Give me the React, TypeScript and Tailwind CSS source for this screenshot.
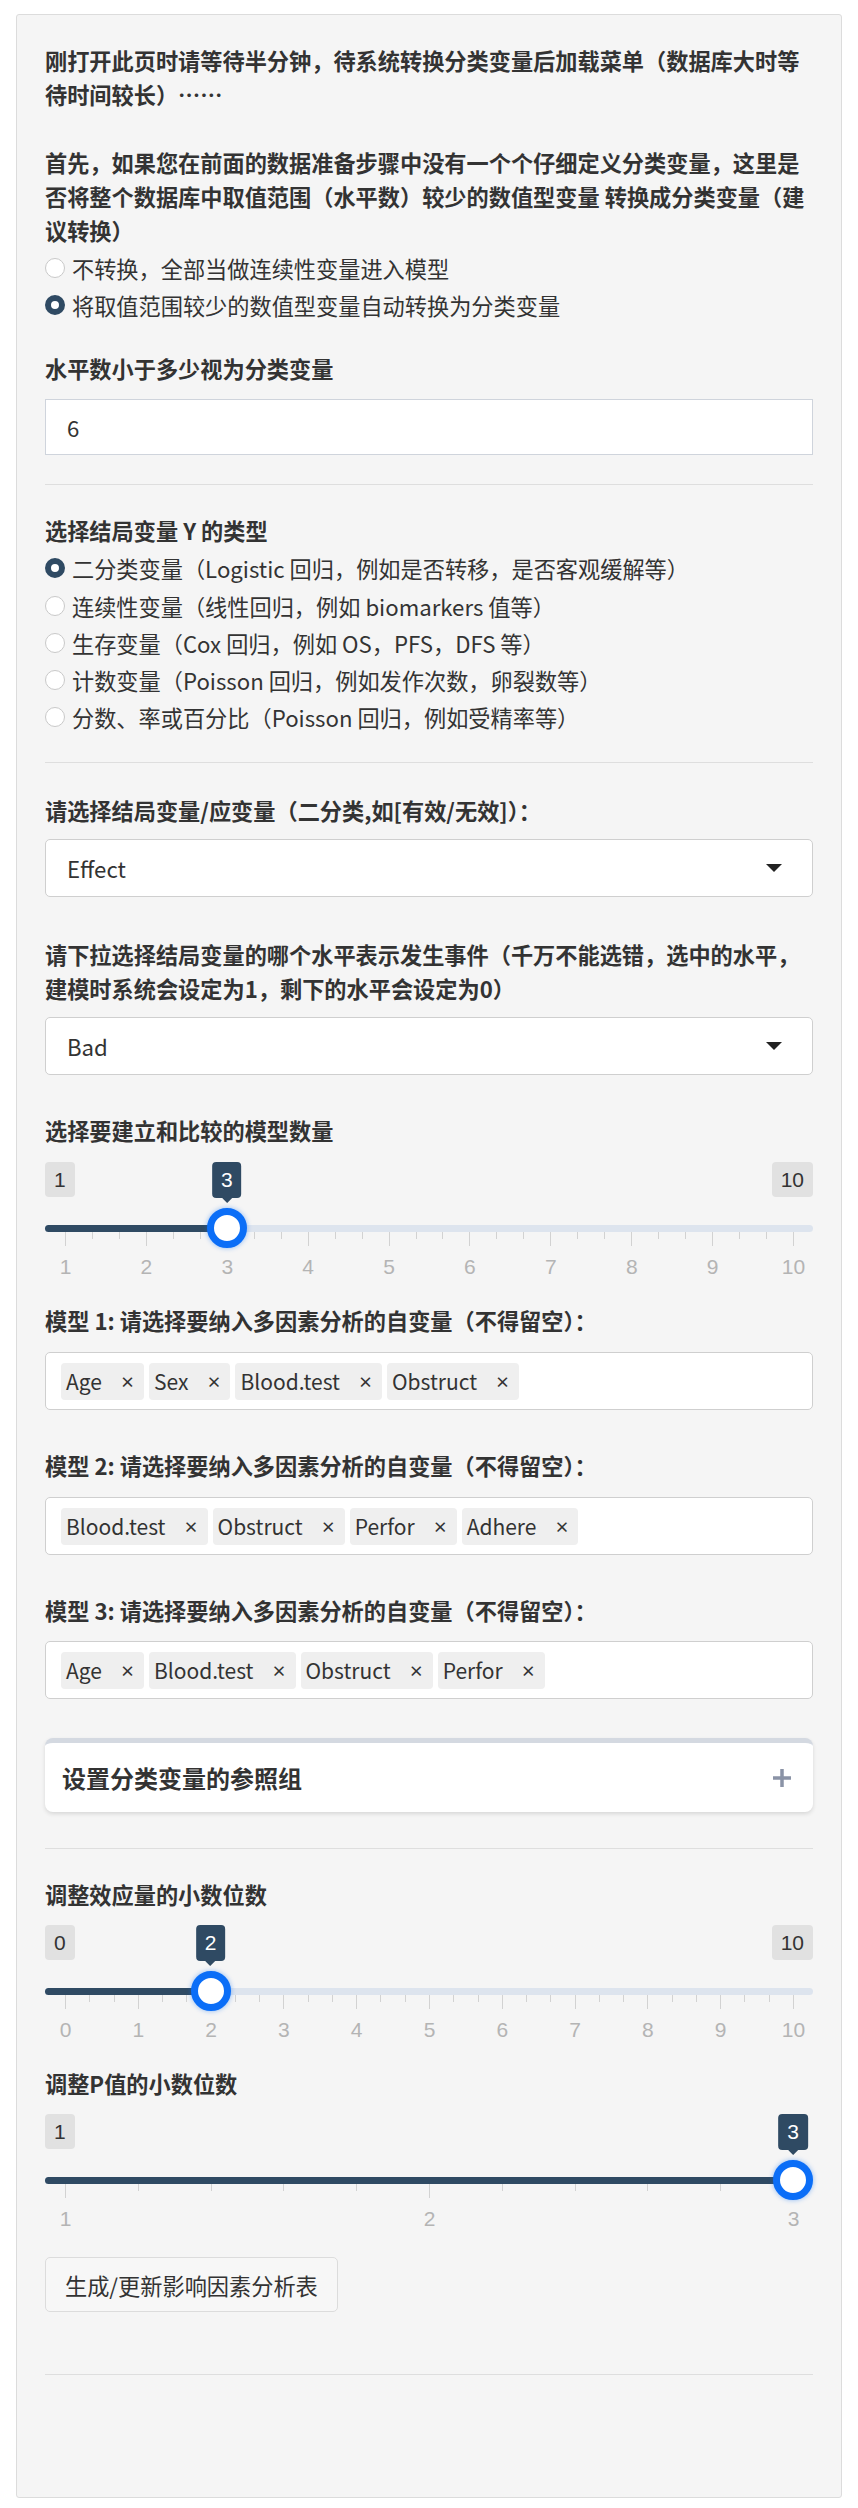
import React from "react";

const NAVY = "bg-[#2f4a63]";

function Label({ children, className = "" }: { children: React.ReactNode; className?: string }) {
  return <div className={`font-bold text-[#333] leading-[34px] ${className}`}>{children}</div>;
}

function Radio({ checked, children }: { checked?: boolean; children: React.ReactNode }) {
  return (
    <div className="flex items-center h-[37.3px]">
      {checked ? (
        <span className="w-[20px] h-[20px] rounded-full border-[6px] border-[#2f4a63] bg-white shrink-0" />
      ) : (
        <span className="w-[20px] h-[20px] rounded-full border border-[#c9c9c9] bg-white shrink-0" />
      )}
      <span className="ml-[7px] text-[#333]">{children}</span>
    </div>
  );
}

function Hr({ className = "" }: { className?: string }) {
  return <div className={`border-t border-[#dedede] ${className}`} />;
}

function SelectBox({ value, className = "" }: { value: string; className?: string }) {
  return (
    <div
      className={`h-[58px] bg-white border border-[#cfcfcf] rounded-[5px] flex items-center justify-between pl-[21px] pr-[30px] ${className}`}
    >
      <span className="text-[#333]">{value}</span>
      <span className="w-0 h-0 border-l-[8px] border-r-[8px] border-t-[8px] border-l-transparent border-r-transparent border-t-[#222]" />
    </div>
  );
}

function MultiSelect({ tags, className = "" }: { tags: string[]; className?: string }) {
  return (
    <div
      className={`h-[58px] bg-white border border-[#cfcfcf] rounded-[5px] flex items-center gap-[5px] pl-[15px] ${className}`}
    >
      {tags.map((t) => (
        <span
          key={t}
          className="h-[37px] flex items-center bg-[#efefef] rounded-[4px] pl-[5px] pr-[9px] text-[#333]"
        >
          <span className="text-[21px]">{t}</span>
          <span className="ml-[18px] font-bold text-[15px] leading-[15px] text-[#333]">×</span>
        </span>
      ))}
    </div>
  );
}

function Slider({
  min,
  max,
  value,
  sub,
  className = "",
}: {
  min: number;
  max: number;
  value: number;
  sub: number;
  className?: string;
}) {
  const inner = 728;
  const n = max - min;
  const pos = (v: number) => 20 + ((v - min) / n) * inner;
  const hx = pos(value);
  const ticks: { x: number; major: boolean }[] = [];
  const total = n * sub;
  for (let i = 0; i <= total; i++) {
    ticks.push({ x: 20 + (i / total) * inner, major: i % sub === 0 });
  }
  const labels: number[] = [];
  for (let v = min; v <= max; v++) labels.push(v);
  const numFont = "font-['Liberation_Sans',Arial,sans-serif]";
  return (
    <div className={`relative h-[141px] ${numFont} ${className}`}>
      <span className="absolute left-0 top-0 h-[35px] px-[9px] rounded-[4px] bg-[#e1e1e1] text-[#333] text-[21px] leading-[35px]">
        {min}
      </span>
      {value !== max && (
        <span className="absolute right-0 top-0 h-[35px] px-[9px] rounded-[4px] bg-[#e1e1e1] text-[#333] text-[21px] leading-[35px]">
          {max}
        </span>
      )}
      <div className="absolute left-0 right-0 top-[62.5px] h-[7px] rounded-full bg-[#dde4ee]" />
      <div className={`absolute left-0 top-[62.5px] h-[7px] rounded-full ${NAVY}`} style={{ width: hx }} />
      {ticks.map((t, i) => (
        <div
          key={i}
          className={`absolute top-[70px] w-px bg-[#d2d2d2] ${t.major ? "h-[14px]" : "h-[7px]"}`}
          style={{ left: t.x }}
        />
      ))}
      {labels.map((v) => (
        <span
          key={v}
          className="absolute top-[93px] -translate-x-1/2 text-[21px] leading-[24px] text-[#b4b4b4]"
          style={{ left: pos(v) + 0.5 }}
        >
          {v}
        </span>
      ))}
      <div
        className="absolute top-[46px] w-[40px] h-[40px] rounded-full border-[7px] border-[#0b6ef7] bg-white shadow-[0_0_5px_rgba(11,110,247,0.45)]"
        style={{ left: hx - 20 }}
      />
      <div className="absolute top-0 -translate-x-1/2" style={{ left: hx }}>
        <div className={`relative h-[36px] px-[9px] rounded-[4px] ${NAVY} text-white text-[21px] leading-[36px]`}>
          {value}
          <span className="absolute left-1/2 -translate-x-1/2 top-[36px] w-0 h-0 border-l-[5px] border-r-[5px] border-t-[5px] border-l-transparent border-r-transparent border-t-[#2f4a63]" />
        </div>
      </div>
    </div>
  );
}

export default function App() {
  return (
    <div className="bg-white pt-[14px] px-[16px] font-['Noto_Sans_CJK_SC','Noto_Sans',sans-serif] text-[22.2px] leading-[34px] text-[#333]">
      <div className="border border-[#dcdcdc] bg-[#f5f5f5] rounded-[3px] px-[28px] pt-[28px] pb-[28px]">
        <Label>刚打开此页时请等待半分钟，待系统转换分类变量后加载菜单（数据库大时等待时间较长）……</Label>
        <Label className="mt-[34px]">
          首先，如果您在前面的数据准备步骤中没有一个个仔细定义分类变量，这里是否将整个数据库中取值范围（水平数）较少的数值型变量 转换成分类变量（建议转换）
        </Label>
        <div className="mt-[2px]">
          <Radio>不转换，全部当做连续性变量进入模型</Radio>
          <Radio checked>将取值范围较少的数值型变量自动转换为分类变量</Radio>
        </div>

        <Label className="mt-[27px]">水平数小于多少视为分类变量</Label>
        <div className="mt-[14px] h-[56px] bg-white border border-[#cfd4dc] flex items-center pl-[21px] text-[#333]">
          6
        </div>

        <Hr className="mt-[29px]" />

        <Label className="mt-[28px]">选择结局变量 Y 的类型</Label>
        <div className="mt-[3px]">
          <Radio checked>二分类变量（Logistic 回归，例如是否转移，是否客观缓解等）</Radio>
          <Radio>连续性变量（线性回归，例如 biomarkers 值等）</Radio>
          <Radio>生存变量（Cox 回归，例如 OS，PFS，DFS 等）</Radio>
          <Radio>计数变量（Poisson 回归，例如发作次数，卵裂数等）</Radio>
          <Radio>分数、率或百分比（Poisson 回归，例如受精率等）</Radio>
        </div>

        <Hr className="mt-[26px]" />

        <Label className="mt-[30px]">请选择结局变量/应变量（二分类,如[有效/无效]）：</Label>
        <SelectBox value="Effect" className="mt-[12px]" />

        <Label className="mt-[40px]">
          请下拉选择结局变量的哪个水平表示发生事件（千万不能选错，选中的水平，建模时系统会设定为1，剩下的水平会设定为0）
        </Label>
        <SelectBox value="Bad" className="mt-[12px]" />

        <Label className="mt-[38px]">选择要建立和比较的模型数量</Label>
        <Slider min={1} max={10} value={3} sub={3} className="mt-[15px]" />

        <Label>模型 1: 请选择要纳入多因素分析的自变量（不得留空）：</Label>
        <MultiSelect tags={["Age", "Sex", "Blood.test", "Obstruct"]} className="mt-[15px]" />

        <Label className="mt-[38px]">模型 2: 请选择要纳入多因素分析的自变量（不得留空）：</Label>
        <MultiSelect tags={["Blood.test", "Obstruct", "Perfor", "Adhere"]} className="mt-[15px]" />

        <Label className="mt-[38px]">模型 3: 请选择要纳入多因素分析的自变量（不得留空）：</Label>
        <MultiSelect tags={["Age", "Blood.test", "Obstruct", "Perfor"]} className="mt-[14px]" />

        <div className="mt-[39px] h-[74px] bg-white rounded-[8px] border-t-[5px] border-[#d4d9e1] shadow-[0_2px_4px_rgba(0,0,0,0.12)] flex items-center justify-between pl-[17px] pr-[21px]">
          <span className="font-bold text-[24px] text-[#333]">设置分类变量的参照组</span>
          <svg width="20" height="20" viewBox="0 0 20 20">
            <path d="M10 1v18M1 10h18" stroke="#8a93a6" strokeWidth="3.5" />
          </svg>
        </div>

        <Hr className="mt-[36px]" />

        <Label className="mt-[28px]">调整效应量的小数位数</Label>
        <Slider min={0} max={10} value={2} sub={3} className="mt-[14px]" />

        <Label>调整P值的小数位数</Label>
        <Slider min={1} max={3} value={3} sub={5} className="mt-[14px]" />

        <button className="block mt-[2px] h-[55px] px-[19px] border border-[#dcdcdc] rounded-[5px] bg-[#f7f7f7] text-[#333] font-['Noto_Sans_CJK_SC',sans-serif] text-[22.2px]">
          生成/更新影响因素分析表
        </button>

        <Hr className="mt-[62px]" />
        <div className="h-[94px]" />
      </div>
    </div>
  );
}
